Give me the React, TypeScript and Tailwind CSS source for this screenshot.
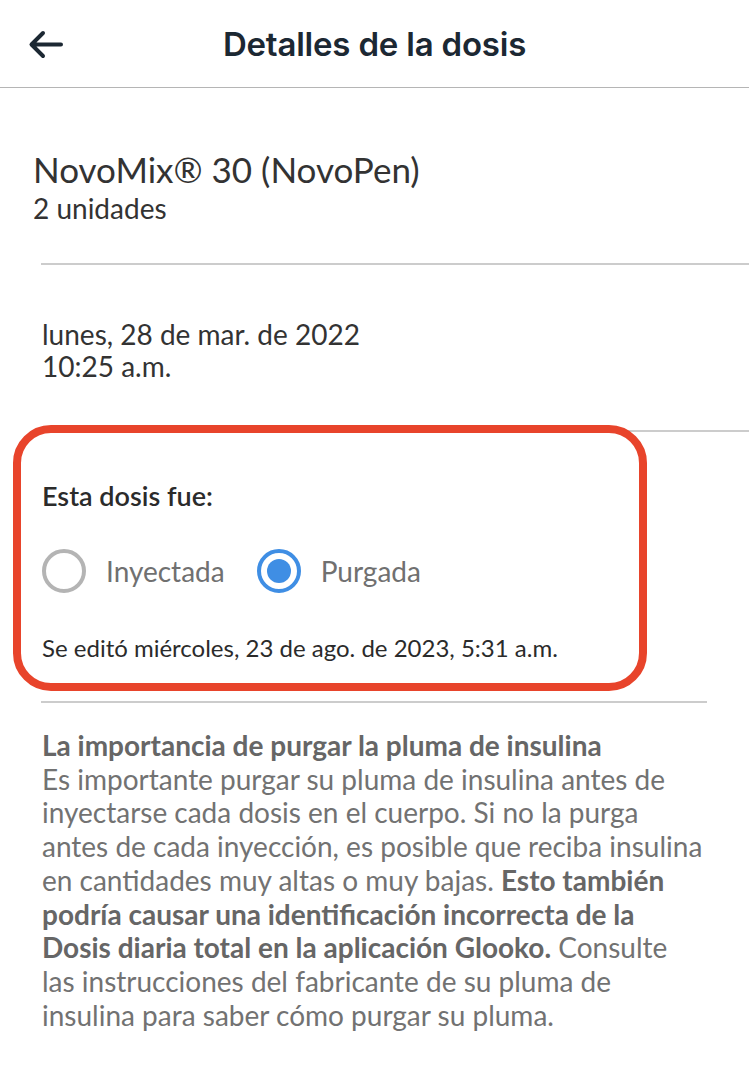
import React from "react";

const lato = { fontFamily: "Lato, 'Noto Sans', sans-serif" };

function BackArrow() {
  return (
    <svg width="36" height="30" viewBox="0 0 36 30" fill="none" aria-hidden>
      <path
        d="M33 14.5H4M15 3L3.5 14.5L15 26"
        stroke="#1c2833"
        strokeWidth="4"
        strokeLinecap="round"
        strokeLinejoin="round"
      />
    </svg>
  );
}

function Radio({ checked, label }: { checked: boolean; label: string }) {
  return (
    <div className="flex items-center">
      {checked ? (
        <div className="flex h-[44px] w-[44px] items-center justify-center rounded-full border-[4px] border-[#3f8ee4]">
          <div className="h-[24px] w-[24px] rounded-full bg-[#3f8ee4]" />
        </div>
      ) : (
        <div className="h-[44px] w-[44px] rounded-full border-[4px] border-[#b4b4b4]" />
      )}
      <span className="ml-[20px] text-[28px] leading-[32px] text-[#707070]">{label}</span>
    </div>
  );
}

export default function App() {
  return (
    <div className="w-[749px] min-h-[1076px] bg-white" style={lato}>
      {/* Header */}
      <div className="grid h-[88px] grid-cols-[96px_1fr_96px] items-center border-b border-[#b5b5b5]">
        <div className="flex pl-[28px] pt-[2px]">
          <BackArrow />
        </div>
        <div
          className="text-center text-[33px] font-semibold leading-[40px] tracking-[-0.2px] text-[#1c2833]"
          style={{ fontFamily: "Inter, Roboto, 'Noto Sans', sans-serif" }}
        >
          Detalles de la dosis
        </div>
        <div />
      </div>

      {/* Insulin */}
      <div className="pl-[33px] pt-[60px] pb-[39px]">
        <div className="text-[35px] leading-[42px] text-[#333333]">NovoMix® 30 (NovoPen)</div>
        <div className="mt-[2px] text-[28px] leading-[32px] text-[#333333]">2 unidades</div>
      </div>
      <div className="ml-[41px] h-[2px] bg-[#cccccc]" />

      {/* Date */}
      <div className="pl-[42px] pt-[53px] pb-[48px] text-[28px] leading-[32px] text-[#333333]">
        <div>lunes, 28 de mar. de 2022</div>
        <div>10:25 a.m.</div>
      </div>
      <div className="ml-[41px] h-[2px] bg-[#cccccc]" />

      {/* Dose type */}
      <div className="relative">
        <div className="pl-[42px] pt-[49px] pb-[39px]">
          <div className="text-[27px] font-semibold leading-[30px] text-[#2b2b2b]">Esta dosis fue:</div>
          <div className="mt-[38px] flex items-center gap-[32px]">
            <Radio checked={false} label="Inyectada" />
            <Radio checked={true} label="Purgada" />
          </div>
          <div className="mt-[41px] text-[24px] leading-[28px] text-[#2b2b2b]">
            Se editó miércoles, 23 de ago. de 2023, 5:31 a.m.
          </div>
        </div>
        <div className="pointer-events-none absolute left-[13px] top-[-7px] h-[266px] w-[634px] rounded-[38px] border-[8px] border-[#e8442b]" />
      </div>
      <div className="ml-[41px] mr-[42px] h-[2px] bg-[#cccccc]" />

      {/* Info */}
      <div className="pl-[42px] pr-[10px] pt-[26px] text-[28px] leading-[33.7px] text-[#727272]">
        <span className="font-bold text-[#666666]">La importancia de purgar la pluma de insulina</span>
        <br />
        Es importante purgar su pluma de insulina antes de
        <br />
        inyectarse cada dosis en el cuerpo. Si no la purga
        <br />
        antes de cada inyección, es posible que reciba insulina
        <br />
        en cantidades muy altas o muy bajas.{" "}
        <span className="font-bold text-[#666666]">
          Esto también
          <br />
          podría causar una identificación incorrecta de la
          <br />
          Dosis diaria total en la aplicación Glooko.
        </span>{" "}
        Consulte
        <br />
        las instrucciones del fabricante de su pluma de
        <br />
        insulina para saber cómo purgar su pluma.
      </div>
    </div>
  );
}
